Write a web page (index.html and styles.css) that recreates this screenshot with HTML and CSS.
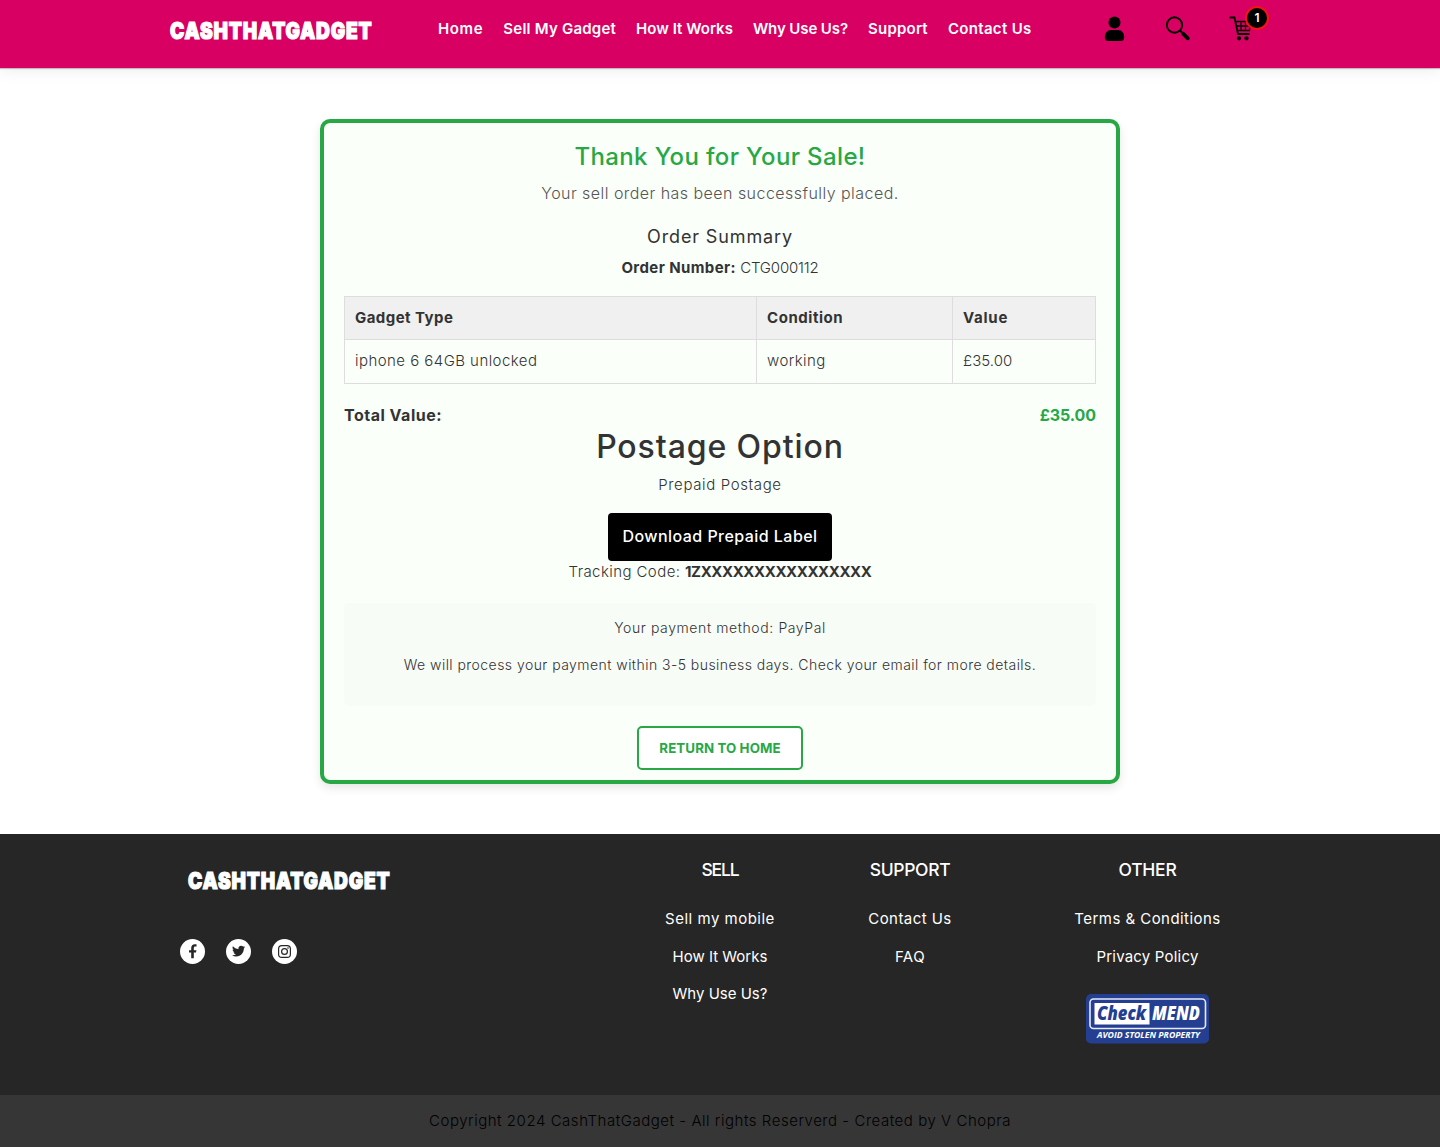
FILE: index.html
```html
<!DOCTYPE html>
<html lang="en">
<head>
<meta charset="utf-8">
<title>CashThatGadget</title>
<link rel="stylesheet" href="styles.css">
</head>
<body>
<header class="header">
  <svg class="logo" width="203" height="24" viewBox="0 0 203 24"><text class="logo-text" x="0" y="19.300" textLength="202.500" lengthAdjust="spacingAndGlyphs">CASHTHATGADGET</text></svg>
  <nav class="nav">
    <a class="n1">Home</a><a class="n2">Sell My Gadget</a><a class="n3">How It Works</a><a class="n4">Why Use Us?</a><a class="n5">Support</a><a class="n6">Contact Us</a>
  </nav>
  <div class="tools">
    <svg width="22" height="26" viewBox="0 0 22 26"><circle cx="10.500" cy="6.500" r="6"/><path d="M7 14H14C18 14 20.200 17.500 20.200 21C20.200 24 19 25 16.500 25H4.500C2 25 .8 24 .8 21C.8 17.500 3 14 7 14Z"/></svg>
    <svg width="26" height="26" viewBox="0 0 26 26"><circle cx="9.500" cy="9" r="7.700" fill="none" stroke="#000" stroke-width="1.900"/><path d="M15 14.500L17.500 17" stroke="#000" stroke-width="2"/><path d="M18.300 17.800L22.800 22.300" stroke="#000" stroke-width="3.800" stroke-linecap="round"/></svg>
    <div class="cart">
      <svg width="24" height="26" viewBox="0 0 24 26"><path d="M-.5 1.500H4.500L8 18H19.500" fill="none" stroke="#000" stroke-width="1.800"/><path d="M5.500 5.500H20L19.500 14.500H7.500M6.500 10H20M11 5.500V14.500M15.500 5.500V14.500" fill="none" stroke="#000" stroke-width="1.300"/><circle cx="9" cy="22.300" r="2.100"/><circle cx="16.500" cy="22.300" r="2.100"/></svg>
      <span class="badge">1</span>
    </div>
  </div>
</header>
<main class="card">
  <h2 class="title">Thank You for Your Sale!</h2>
  <p class="subtitle">Your sell order has been successfully placed.</p>
  <h3 class="summary">Order Summary</h3>
  <p class="order"><b>Order Number:</b> <span class="order-id">CTG000112</span></p>
  <table class="items">
    <tr class="head"><th class="c1">Gadget Type</th><th class="c2">Condition</th><th class="c3">Value</th></tr>
    <tr><td>iphone 6 64GB unlocked</td><td>working</td><td class="price">£35.00</td></tr>
  </table>
  <div class="total"><span class="label">Total Value:</span><span class="amount">£35.00</span></div>
  <h1 class="postage">Postage Option</h1>
  <p class="prepaid">Prepaid Postage</p>
  <a class="download">Download Prepaid Label</a>
  <p class="tracking">Tracking Code: <b>1ZXXXXXXXXXXXXXXXX</b></p>
  <section class="payment">
    <p class="method">Your payment method: PayPal</p>
    <p class="note">We will process your payment within 3-5 business days. Check your email for more details.</p>
  </section>
  <a class="return">RETURN TO HOME</a>
</main>
<footer class="footer">
  <div class="brand">
    <svg class="logo-foot" width="203" height="24" viewBox="0 0 203 24"><text class="logo-text" x="0" y="19.300" textLength="202.500" lengthAdjust="spacingAndGlyphs">CASHTHATGADGET</text></svg>
    <div class="social">
      <svg width="25" height="25" viewBox="0 0 25 25"><circle cx="12.500" cy="12.500" r="12.500" fill="#fff"/><path d="M11.200 19.200V13.500H9V11.200H11.200V9.300C11.200 6.500 12.600 5.200 14.800 5.200L16.500 5.350V7.500H15.300C14.200 7.500 13.800 8.100 13.800 9V11.200H16.400L16 13.500H13.800V19.200Z" fill="#262626"/></svg>
      <svg width="25" height="25" viewBox="0 0 25 25"><circle cx="12.500" cy="12.500" r="12.500" fill="#fff"/><g transform="translate(6 5.500) scale(.55)"><path d="M23.950 4.570a10 10 0 0 1-2.820.77 4.960 4.960 0 0 0 2.160-2.720c-.95.550-2 .950-3.130 1.180a4.920 4.920 0 0 0-8.380 4.480C7.690 8.090 4.070 6.130 1.640 3.160a4.820 4.820 0 0 0-.67 2.480c0 1.710.87 3.210 2.190 4.100a4.900 4.900 0 0 1-2.230-.62v.06a4.920 4.920 0 0 0 3.950 4.830 5 5 0 0 1-2.210.08 4.940 4.940 0 0 0 4.600 3.420A9.870 9.870 0 0 1 0 19.540a14 14 0 0 0 7.560 2.210c9.050 0 14-7.500 14-13.980l-.02-.64a9.940 9.940 0 0 0 2.410-2.560Z" fill="#262626"/></g></svg>
      <svg width="25" height="25" viewBox="0 0 25 25"><circle cx="12.500" cy="12.500" r="12.500" fill="#fff"/><rect x="6.600" y="6.600" width="11.800" height="11.800" rx="3.200" fill="none" stroke="#262626" stroke-width="1.200"/><circle cx="12.500" cy="12.500" r="2.900" fill="none" stroke="#262626" stroke-width="1.200"/><circle cx="16" cy="9" r=".8" fill="#262626"/></svg>
    </div>
  </div>
  <div class="col"><h4 class="h-sell">SELL</h4><a class="f1">Sell my mobile</a><a class="f2">How It Works</a><a class="f3">Why Use Us?</a></div>
  <div class="col"><h4 class="h-support">SUPPORT</h4><a class="f4">Contact Us</a><a class="f5">FAQ</a></div>
  <div class="col"><h4 class="h-other">OTHER</h4><a class="f6">Terms &amp; Conditions</a><a class="f7">Privacy Policy</a>
    <svg class="mend" width="123" height="50" viewBox="0 0 123 50"><rect width="123" height="49.500" rx="5" fill="#243f92"/><rect x="4" y="5" width="115.500" height="29.500" rx="3.500" fill="none" stroke="#e6eaf7" stroke-width="1.600"/><path d="M8.500 9H63.500V30.500H8.500Z" fill="#fff"/><text class="mend-big" x="11" y="26" textLength="49" lengthAdjust="spacingAndGlyphs" fill="#243f92">Check</text><text class="mend-big" x="66" y="26" textLength="48" lengthAdjust="spacingAndGlyphs" fill="#fff">MEND</text><text class="mend-small" x="11" y="44" textLength="103" lengthAdjust="spacingAndGlyphs" fill="#fff">AVOID STOLEN PROPERTY</text></svg>
  </div>
</footer>
<div class="copy">Copyright 2024 CashThatGadget - All rights Reserverd - Created by V Chopra</div>
</body>
</html>
```
FILE: styles.css
```css
* { box-sizing: border-box; }
body { margin: 0; min-height: 1147px; display: flex; flex-direction: column; background: #fff; color: #333; font: 300 15px/24px Inter, "Open Sans", sans-serif; }
h1, h2, h3, h4, p { margin: 0; }
svg { display: block; overflow: visible; }
b { font-weight: 700; }

.header { height: 68px; background: #d80062; display: flex; box-shadow: 0 1px 1px rgba(0,0,0,.22), 0 2px 15px rgba(0,0,0,.08); }
.logo { margin: 20px 0 0 170px; }
.logo-text { font: 900 23px Inter, sans-serif; letter-spacing: 1px; fill: #fff; stroke: #fff; stroke-width: 1.2; }
.nav { display: flex; gap: 20px; margin: 17px 0 0 65px; color: #fff; font-weight: 600; white-space: nowrap; width: 595px; }
.n1 { letter-spacing: .65px; }
.n2 { letter-spacing: .23px; }
.n3 { letter-spacing: .02px; }
.n4 { letter-spacing: -.1px; }
.n5 { letter-spacing: .22px; }
.n6 { letter-spacing: .33px; }
.tools { display: flex; margin: 16px 0 0 71px; gap: 39px; }
.cart { position: relative; }
.badge { position: absolute; left: 15px; top: -10px; width: 24px; height: 24px; border: 2px solid #f51414; border-radius: 50%; background: #000; color: #fff; font-size: 12px; font-weight: 600; line-height: 20px; text-align: center; }

.card { width: 800px; height: 665px; margin: 51px auto 50px; padding: 20px 20px 10px; border: 4px solid #28a745; border-radius: 10px; background: #fafffa; box-shadow: 0 4px 10px rgba(0,0,0,.1); display: flex; flex-direction: column; text-align: center; }
.title { color: #28a745; font-size: 24px; font-weight: 500; line-height: 28px; letter-spacing: .36px; }
.subtitle { margin-top: 10px; font-size: 16px; color: #555; letter-spacing: .455px; }
.summary { margin-top: 20px; font-size: 18px; font-weight: 400; letter-spacing: .86px; }
.order { margin-top: 7px; }
.order b { letter-spacing: .4px; }
.order-id { letter-spacing: -.17px; }
.items { margin-top: 16px; width: 752px; height: 88px; table-layout: fixed; border-collapse: collapse; text-align: left; letter-spacing: .45px; }
.items th, .items td { border: 1px solid #ddd; padding: 0 10px; }
.items th { height: 43px; background: #f0f0f0; font-weight: 700; }
.items td { height: 44px; padding-bottom: 1px; }
.c1 { width: 412px; }
.c2 { width: 196px; letter-spacing: .55px; }
.c3 { letter-spacing: .75px; }
.items .price { letter-spacing: .05px; }
.total { margin-top: 19px; display: flex; justify-content: space-between; font-size: 16px; font-weight: 700; }
.label { letter-spacing: .5px; }
.amount { color: #28a745; letter-spacing: -.1px; }
.postage { margin-top: 1px; font-size: 32px; font-weight: 500; line-height: 38px; letter-spacing: .9px; }
.prepaid { margin-top: 7px; letter-spacing: .63px; }
.download { width: 224px; height: 48px; margin: 16px auto 0; border-radius: 4px; background: #000; color: #fff; font-size: 16px; font-weight: 500; line-height: 47px; letter-spacing: .45px; }
.tracking { line-height: 22px; letter-spacing: .42px; }
.tracking b { letter-spacing: -.4px; }
.payment { margin-top: 20px; height: 103px; padding-top: 14px; border-radius: 5px; background: #f8fcf7; font-size: 14px; line-height: 22px; }
.method { letter-spacing: .6px; }
.note { margin-top: 15px; letter-spacing: .45px; }
.return { width: 166px; height: 44px; margin: 20px auto 0; border: 2px solid #28a745; border-radius: 5px; background: #fff; color: #28a745; font-size: 13.300px; font-weight: 700; line-height: 40px; letter-spacing: .1px; }

.footer { height: 261px; padding-left: 180px; display: grid; grid-template-columns: 445px 190px 190px 285px; background: #262626; color: #fff; font-weight: 400; }
.logo-foot { margin: 36px 0 0 8px; }
.social { display: flex; gap: 21px; margin-top: 45px; }
.col { display: flex; flex-direction: column; align-items: center; padding-top: 23px; }
.col h4 { font-size: 17.500px; font-weight: 500; line-height: 25px; margin-bottom: 23px; }
.h-sell { letter-spacing: -1.1px; }
.h-support { letter-spacing: -.35px; }
.h-other { letter-spacing: -.25px; }
.col a { line-height: 27.500px; margin-bottom: 10px; }
.f1 { letter-spacing: .5px; }
.f4, .f5, .f6 { letter-spacing: .45px; }
.f7 { letter-spacing: .2px; }
.mend { margin-top: 14px; }
.mend-big { font: italic 800 19px "Open Sans", sans-serif; }
.mend-small { font: italic 700 9px "Open Sans", sans-serif; }
.copy { flex: 1; background: #363636; color: #000; text-align: center; line-height: 52px; letter-spacing: .535px; }
```
